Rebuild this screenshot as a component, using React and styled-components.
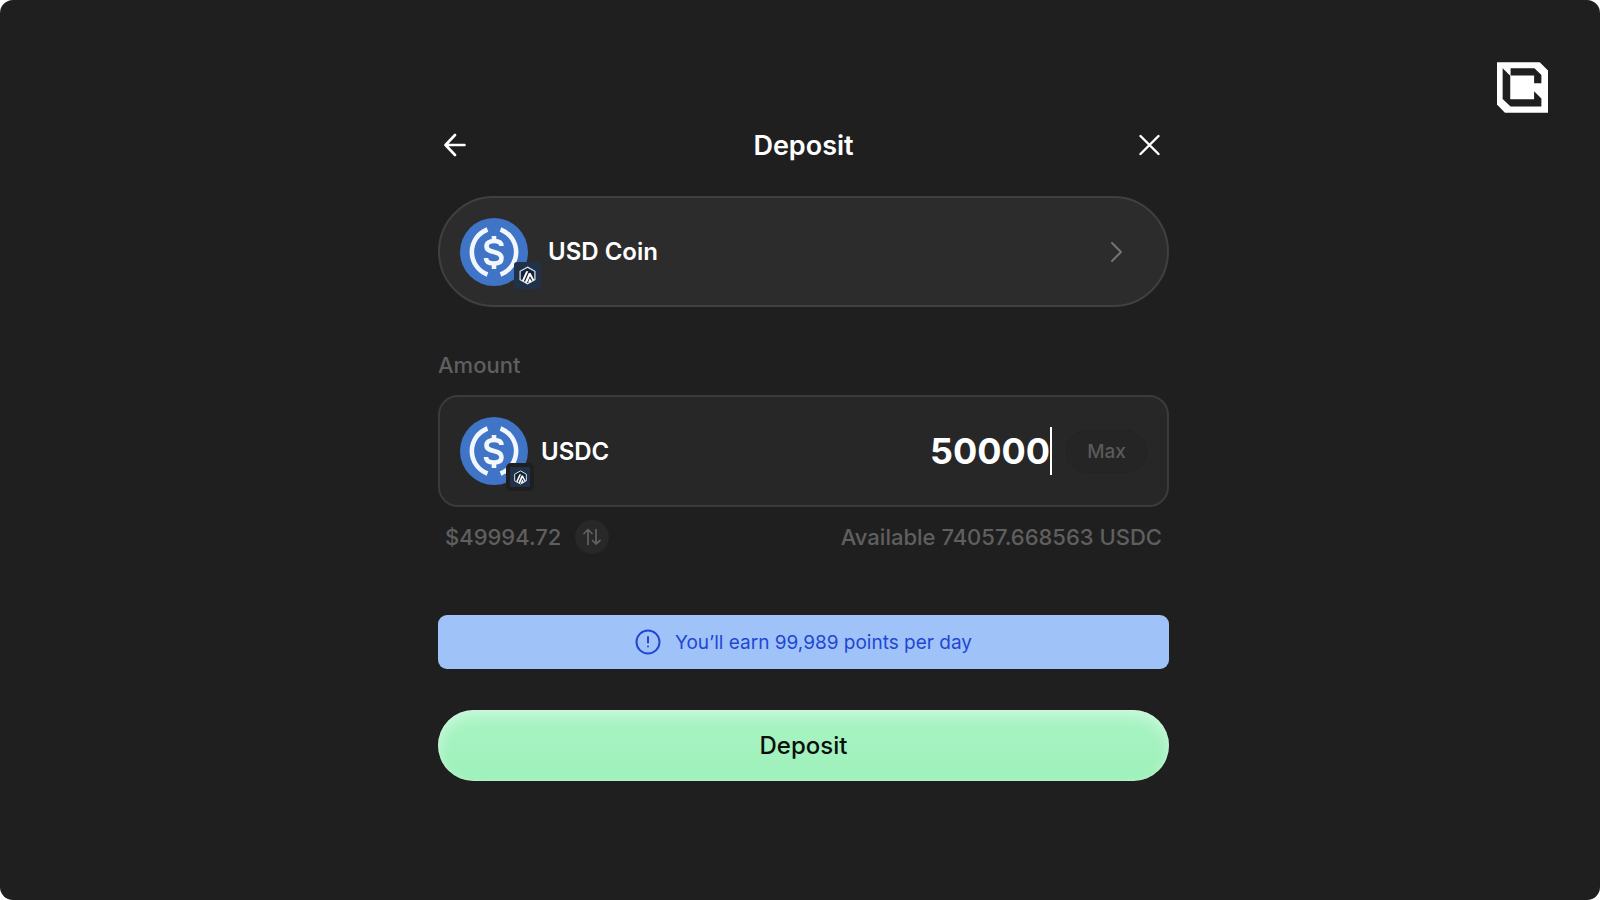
import React, { useState } from "react";
import styled, { createGlobalStyle } from "styled-components";

const GlobalStyle = createGlobalStyle`
  * {
    box-sizing: border-box;
  }
  body {
    margin: 0;
    background-color: #fff;
    font-family: Inter, "Liberation Sans", sans-serif;
  }
  button, input {
    font-family: inherit;
  }
`;

const Page = styled.div`
  min-height: 100vh;
  display: grid;
  grid-template-columns: 438fr 731fr 431fr;
  align-items: start;
  background-color: #1f1f1f;
  border-radius: 13px;
`;

const Panel = styled.main`
  grid-column: 2;
  min-width: 0;
  padding-top: 127px;
  padding-bottom: 40px;
`;

const Brand = styled.a`
  grid-column: 3;
  justify-self: end;
  margin: 62px 52px 0 0;
  display: block;
  line-height: 0;
`;

const Header = styled.header`
  height: 36px;
  padding: 0 2px;
  display: flex;
  align-items: center;
  justify-content: space-between;
`;

const Title = styled.h1`
  margin: 0;
  color: #fff;
  font-size: 27px;
  font-weight: 600;
`;

const IconButton = styled.button`
  width: 32px;
  height: 32px;
  padding: 0;
  display: flex;
  align-items: center;
  justify-content: center;
  background: none;
  border: none;
  cursor: pointer;
`;

const TokenSelect = styled.button`
  width: 100%;
  height: 111px;
  margin-top: 33px;
  padding: 0 43px 0 20px;
  display: flex;
  align-items: center;
  gap: 20px;
  background-color: #2c2c2c;
  border: 2px solid #404040;
  border-radius: 56px;
  cursor: pointer;
`;

const TokenName = styled.span`
  flex: ${(props) => (props.$grow ? 1 : "none")};
  color: #fff;
  font-size: 24px;
  font-weight: 600;
  text-align: left;
`;

const Coin = styled.span`
  position: relative;
  width: 68px;
  height: 68px;
  line-height: 0;
`;

const NetworkBadge = styled.span`
  position: absolute;
  left: ${(props) => (props.$framed ? 46 : 54)}px;
  top: ${(props) => (props.$framed ? 46 : 44)}px;
  width: ${(props) => (props.$framed ? 28 : 27)}px;
  height: ${(props) => (props.$framed ? 28 : 27)}px;
  display: flex;
  align-items: center;
  justify-content: center;
  background-color: #213147;
  border: ${(props) => (props.$framed ? "4px solid #1f1f1f" : "none")};
  border-radius: ${(props) => (props.$framed ? 5 : 3)}px;
`;

const Label = styled.label`
  display: block;
  margin-top: 44px;
  color: #5f5f5f;
  font-size: 22px;
  font-weight: 500;
  line-height: 28px;
`;

const AmountBox = styled.div`
  height: 112px;
  margin-top: 16px;
  padding: 0 20px;
  display: flex;
  align-items: center;
  background-color: #272727;
  border: 2px solid #3b3b3b;
  border-radius: 20px;

  ${TokenName} {
    margin-left: 13px;
  }
`;

const AmountInput = styled.input`
  flex: 1;
  min-width: 0;
  height: 48px;
  padding: 0;
  background: none;
  border: none;
  outline: none;
  color: #fff;
  caret-color: transparent;
  font-size: 36px;
  font-weight: 700;
  text-align: right;
`;

const Caret = styled.span`
  width: 2px;
  height: 48px;
  background-color: #fff;
`;

const MaxButton = styled.button`
  width: 81px;
  height: 43px;
  margin-left: 14px;
  padding: 0;
  background-color: #252525;
  border: 1px solid #232323;
  border-radius: 22px;
  color: #5a5a5a;
  font-size: 19px;
  font-weight: 500;
  cursor: pointer;
`;

const Details = styled.div`
  height: 34px;
  margin-top: 13px;
  padding: 0 7px;
  display: flex;
  align-items: center;
  gap: 14px;
  color: #5f5f5f;
  font-size: 22px;
  font-weight: 500;
`;

const SwapButton = styled(IconButton)`
  width: 34px;
  height: 34px;
  background-color: #282828;
  border-radius: 50%;
`;

const Available = styled.span`
  margin-left: auto;
`;

const Notice = styled.div`
  height: 54px;
  margin-top: 61px;
  display: flex;
  align-items: center;
  justify-content: center;
  gap: 14px;
  background-color: #9fc3f8;
  border-radius: 9px;
  color: #2346d2;
  font-size: 19px;
  font-weight: 400;
`;

const DepositButton = styled.button`
  width: 100%;
  height: 71px;
  margin-top: 41px;
  background: linear-gradient(#a8f4c4, #9ef1ba);
  border: none;
  border-radius: 36px;
  box-shadow: inset 0 6px 14px rgba(255, 255, 255, 0.42),
    inset 0 0 2px rgba(255, 255, 255, 0.4);
  color: #0b0f0c;
  font-size: 24px;
  font-weight: 500;
  cursor: pointer;
`;

function Logo() {
  return (
    <svg width="51" height="51" viewBox="81 66 154 153">
      <path
        fill="#fff"
        d="M81 66H210L235 91V219H105L81 194Z"
      />
      <path
        fill="#1f1f1f"
        d="M122 84H194L215 105V130H193V106H122ZM98 84L121 107V178H193V154L215 176V200H122L98 177Z"
      />
    </svg>
  );
}

const CoinMark = styled.g`
  filter: blur(0.6px);
`;

function UsdcIcon() {
  return (
    <svg width="68" height="68" viewBox="0 0 68 68" fill="none">
      <circle cx="34" cy="34" r="34" fill="#3f74c6" />
      <CoinMark stroke="#f2f6fd" strokeWidth="4.6">
        <path d="M27.500 11.500A24 24 0 0 0 27.500 56.500" />
        <path d="M40.500 11.500A24 24 0 0 1 40.500 56.500" />
        <path d="M41.500 28C41.500 24.500 38.500 23 34 23C29.500 23 26.500 25 26.500 28.200C26.500 32 29.500 33 34 34C39 35 41.500 36.500 41.500 40.200C41.500 44 38.500 45.500 34 45.500C29 45.500 26 43.500 26 40" />
        <path d="M34 18V23M34 45.500V51" />
      </CoinMark>
    </svg>
  );
}

function ArbitrumIcon({ size }) {
  return (
    <svg width={size} height={size} viewBox="0 0 20 20" fill="none">
      <path
        d="M10 1.200L17.800 5.600V14.400L10 18.800L2.200 14.400V5.600Z"
        fill="#15233a"
        stroke="#dde5ee"
        strokeWidth="1.300"
      />
      <path
        d="M4.200 15.200L8.600 5.600H10.800L6 16.400ZM7.200 17L11.400 7.400H13.200L17 14.600L15.400 15.800L12.600 10.400L9.400 18ZM12.400 12.800L14.600 16.200L11.600 18L10.800 16.600Z"
        fill="#fff"
      />
    </svg>
  );
}

function Token({ framed }) {
  return (
    <Coin>
      <UsdcIcon />
      <NetworkBadge $framed={framed}>
        <ArbitrumIcon size={framed ? 15 : 19} />
      </NetworkBadge>
    </Coin>
  );
}

function App() {
  const [amount, setAmount] = useState("50000");

  return (
    <>
      <GlobalStyle />
      <Page>
        <Panel>
          <Header>
            <IconButton aria-label="Back">
              <svg width="24" height="24" viewBox="0 0 24 24" fill="none">
                <path
                  d="M20.500 12H1.500M11 2L1.500 12L11 22"
                  stroke="#fff"
                  strokeWidth="2.600"
                  strokeLinecap="round"
                  strokeLinejoin="round"
                />
              </svg>
            </IconButton>
            <Title>Deposit</Title>
            <IconButton aria-label="Close">
              <svg width="24" height="24" viewBox="0 0 24 24" fill="none">
                <path
                  d="M1.500 3L19.500 21M19.500 3L1.500 21"
                  stroke="#fff"
                  strokeWidth="2.400"
                  strokeLinecap="round"
                />
              </svg>
            </IconButton>
          </Header>

          <TokenSelect>
            <Token />
            <TokenName $grow>USD Coin</TokenName>
            <svg width="16" height="20" viewBox="0 0 16 20" fill="none">
              <path
                d="M4 1L13 10L4 19"
                stroke="#747474"
                strokeWidth="2"
                strokeLinecap="round"
                strokeLinejoin="round"
              />
            </svg>
          </TokenSelect>

          <Label htmlFor="amount">Amount</Label>
          <AmountBox>
            <Token framed />
            <TokenName>USDC</TokenName>
            <AmountInput
              id="amount"
              value={amount}
              onChange={(e) => setAmount(e.target.value)}
            />
            <Caret />
            <MaxButton onClick={() => setAmount("74057.668563")}>Max</MaxButton>
          </AmountBox>
          <Details>
            <span>$49994.72</span>
            <SwapButton aria-label="Switch currency">
              <svg width="18" height="18" viewBox="0 0 18 18" fill="none">
                <path
                  d="M5 16.500V2M1 5.500L5 1.500L9 5.500M13 1.500V16M9.500 12.500L13 16L17 12.500"
                  stroke="#626262"
                  strokeWidth="1.700"
                  strokeLinecap="round"
                  strokeLinejoin="round"
                />
              </svg>
            </SwapButton>
            <Available>Available 74057.668563 USDC</Available>
          </Details>

          <Notice>
            <svg width="26" height="26" viewBox="0 0 26 26" fill="none">
              <g stroke="#2346d2" strokeWidth="2" strokeLinecap="round">
                <circle cx="13" cy="13" r="11.500" />
                <path d="M13 8V13.500" />
                <path d="M13 17.500V17.600" />
              </g>
            </svg>
            <span>You’ll earn 99,989 points per day</span>
          </Notice>
          <DepositButton>Deposit</DepositButton>
        </Panel>
        <Brand href="#" aria-label="Home">
          <Logo />
        </Brand>
      </Page>
    </>
  );
}

export default App;
